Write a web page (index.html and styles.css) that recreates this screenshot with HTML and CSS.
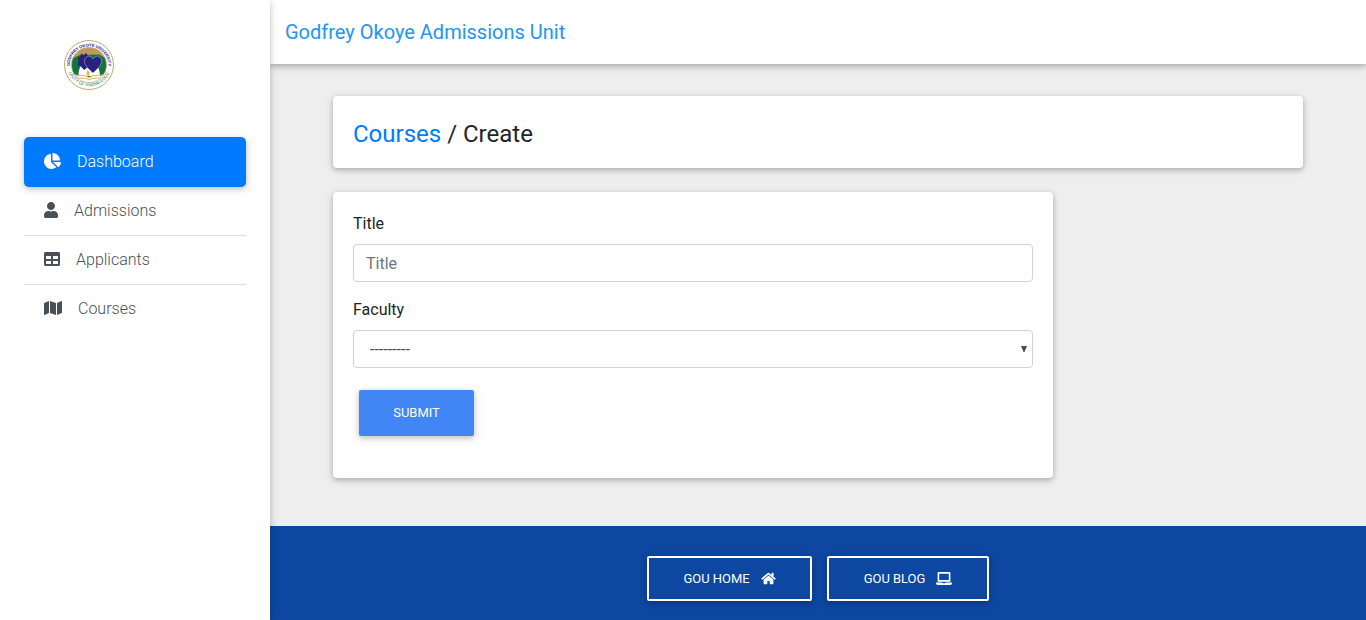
FILE: index.html
```html
<!DOCTYPE html>
<html lang="en">
<head>
<meta charset="utf-8">
<title>Godfrey Okoye Admissions Unit</title>
<link rel="stylesheet" href="styles.css">
</head>
<body>
<div class="app">
  <aside class="sidebar">
    <a class="logo" href="#">
      <svg width="50" height="50" viewBox="0 0 100 100">
        <defs>
          <path id="arc-top" d="M13 62A38.5 38.5 0 1 1 87 62"/>
          <path id="arc-bottom" d="M7 58A44 44 0 0 0 93 58"/>
          <clipPath id="disc"><circle cx="50" cy="50" r="35"/></clipPath>
        </defs>
        <circle cx="50" cy="50" r="49" fill="#fff" stroke="#c5a56c" stroke-width="2"/>
        <g clip-path="url(#disc)">
          <path fill="#fff" d="M0 0h100v100H0z"/>
          <path fill="#bd9a5b" d="M0 0h100v42H0z"/>
          <path fill="#16733b" d="M0 44L32 30 70 29 100 46V71L76 69 62 74H38L24 69 0 71z"/>
          <path fill="#fff" d="M29 72Q29 44 50 44T72 72z"/>
          <path fill="#fff" stroke="#d9b44e" stroke-width="2" d="M10 75Q36 66 50 75Q65 66 90 75V79Q65 73 50 79Q35 73 10 79z"/>
        </g>
        <circle cx="50" cy="50" r="35" fill="none" stroke="#c8aa70" stroke-width="1.5"/>
        <path fill="#28217f" d="M28 35l5-3 1-5 5 3 6-4 2 5 5 3-1 6-4 15-7 5-7-8-6-2 2-6z"/>
        <path fill="#28217f" stroke="#fff" stroke-width=".7" d="M58 66C48 57 41 51 41 42C41 31 54 29 58 38C63 28 76 32 75 43C74 52 66 59 58 66z"/>
        <path fill="#e0b53f" d="M47 59l4 6-1 7-5-2z"/>
        <text class="seal-top"><textPath href="#arc-top" startOffset="50%" text-anchor="middle">GODFREY OKOYE UNIVERSITY</textPath></text>
        <text class="seal-bottom"><textPath href="#arc-bottom" startOffset="50%" text-anchor="middle">UNITY OF KNOWLEDGE</textPath></text>
      </svg>
    </a>
    <nav class="menu">
      <a class="menu-item active" href="#">
        <svg class="icon" width="17" height="16" viewBox="0 0 544 512"><path d="M527.79 288H290.5l158.03 158.03c6.04 6.04 15.98 6.53 22.19.68 38.7-36.46 65.32-85.61 73.13-140.86 1.34-9.46-6.51-17.85-16.06-17.85zm-15.83-64.8C503.72 103.74 408.26 8.28 288.8.04 279.68-.59 272 7.1 272 16.24V240h223.77c9.14 0 16.82-7.68 16.19-16.8zM224 288V50.71c0-9.55-8.39-17.4-17.84-16.06C86.99 51.49-4.1 155.6.14 280.37 4.5 408.51 114.83 513.59 243.03 511.98c50.4-.63 96.97-16.87 135.26-44.03 7.9-5.6 8.42-17.23 1.57-24.08L224 288z"/></svg>
        <span>Dashboard</span>
      </a>
      <a class="menu-item" href="#">
        <svg class="icon" width="14" height="16" viewBox="0 0 448 512"><path d="M224 256c70.7 0 128-57.3 128-128S294.7 0 224 0 96 57.3 96 128s57.3 128 128 128zm89.6 32h-16.7c-22.2 10.2-46.9 16-72.9 16s-50.6-5.8-72.9-16h-16.7C60.2 288 0 348.2 0 422.4V464c0 26.5 21.5 48 48 48h352c26.5 0 48-21.5 48-48v-41.6c0-74.2-60.2-134.4-134.4-134.4z"/></svg>
        <span>Admissions</span>
      </a>
      <a class="menu-item" href="#">
        <svg class="icon" width="16" height="16" viewBox="0 0 512 512"><path d="M464 32H48C21.49 32 0 53.49 0 80v352c0 26.51 21.49 48 48 48h416c26.51 0 48-21.49 48-48V80c0-26.51-21.49-48-48-48zM224 416H64v-96h160v96zm0-160H64v-96h160v96zm224 160H288v-96h160v96zm0-160H288v-96h160v96z"/></svg>
        <span>Applicants</span>
      </a>
      <a class="menu-item" href="#">
        <svg class="icon" width="18" height="16" viewBox="0 0 576 512"><path d="M0 117.66v346.32c0 11.32 11.43 19.06 21.94 14.86L160 416V32L20.12 87.95A32.006 32.006 0 0 0 0 117.66zM192 416l192 64V96L192 32v384zM554.06 33.16L416 96v384l139.88-55.95A31.996 31.996 0 0 0 576 394.34V48.02c0-11.32-11.43-19.06-21.94-14.86z"/></svg>
        <span>Courses</span>
      </a>
    </nav>
  </aside>
  <div class="page">
    <header class="navbar"><a class="brand" href="#">Godfrey Okoye Admissions Unit</a></header>
    <main class="content">
      <section class="card heading-card">
        <h4 class="heading"><a href="#">Courses</a> <span>/</span> <span>Create</span></h4>
      </section>
      <section class="card form-card">
        <form>
          <div class="field">
            <label for="title">Title</label>
            <input class="control" id="title" type="text" placeholder="Title">
          </div>
          <div class="field">
            <label for="faculty">Faculty</label>
            <div class="select-wrap">
              <select class="control select" id="faculty"><option>---------</option></select>
              <svg class="caret" width="6" height="6" viewBox="0 0 6 6"><path d="M0 0h6L3.5 6h-1z"/></svg>
            </div>
          </div>
          <button class="btn btn-submit" type="button">Submit</button>
        </form>
      </section>
    </main>
    <footer class="footer">
      <a class="btn btn-outline" href="#">GOU Home
        <svg class="icon" width="15" height="13" viewBox="0 0 576 512"><path d="M280.37 148.26L96 300.11V464a16 16 0 0 0 16 16l112.06-.29a16 16 0 0 0 15.92-16V368a16 16 0 0 1 16-16h64a16 16 0 0 1 16 16v95.64a16 16 0 0 0 16 16.05L464 480a16 16 0 0 0 16-16V300L295.67 148.26a12.19 12.19 0 0 0-15.3 0zM571.6 251.47L488 182.56V44.05a12 12 0 0 0-12-12h-56a12 12 0 0 0-12 12v72.61L318.47 43a48 48 0 0 0-61 0L4.34 251.47a12 12 0 0 0-1.6 16.9l25.5 31A12 12 0 0 0 45.15 301l235.22-193.74a12.19 12.19 0 0 1 15.3 0L530.9 301a12 12 0 0 0 16.9-1.6l25.5-31a12 12 0 0 0-1.7-16.93z"/></svg>
      </a>
      <a class="btn btn-outline btn-blog" href="#">GOU Blog
        <svg class="icon" width="16" height="13" viewBox="0 0 640 512"><path d="M624 416H381.54c-.74 19.81-14.71 32-32.74 32H288c-18.69 0-33.02-17.47-32.77-32H16c-8.8 0-16 7.2-16 16v16c0 35.2 28.8 64 64 64h512c35.2 0 64-28.8 64-64v-16c0-8.8-7.2-16-16-16zM576 48c0-26.4-21.6-48-48-48H112C85.6 0 64 21.6 64 48v336h512V48zm-64 272H128V64h384v256z"/></svg>
      </a>
    </footer>
  </div>
</div>
</body>
</html>
```
FILE: styles.css
```css
* { box-sizing: border-box; }
body {
  margin: 0;
  background: #eee;
  color: #212529;
  font: 400 16px/24px Roboto, "Liberation Sans", sans-serif;
}
a { color: #007bff; text-decoration: none; }
.icon { fill: currentColor; flex: none; }
.app { display: flex; height: 620px; overflow: hidden; }

.sidebar {
  z-index: 2;
  position: relative;
  flex: none;
  width: 270px;
  padding: 40px 24px 0;
  background: #fff;
  box-shadow: 0 2px 5px rgba(0, 0, 0, .16), 0 2px 10px rgba(0, 0, 0, .12);
}
.logo { display: block; height: 97px; padding-left: 40px; }
.seal-top { font: 700 8.4px "Liberation Sans", sans-serif; letter-spacing: -.2px; fill: #28217f; }
.seal-bottom { font: 400 9px "Liberation Sans", sans-serif; fill: #2f7a56; }
.menu { display: flex; flex-direction: column; }
.menu-item {
  display: flex;
  align-items: center;
  gap: 16px;
  height: 49px;
  padding-left: 20px;
  border-bottom: 1px solid #dfdfdf;
  color: #495057;
  font-weight: 300;
}
.menu-item .icon { margin-bottom: 2px; }
.menu-item:last-child { border-bottom-color: transparent; }
.menu-item.active {
  height: 50px;
  border-color: #007bff;
  border-radius: 5px;
  background: #007bff;
  color: #fff;
  box-shadow: 0 2px 5px rgba(0, 0, 0, .16), 0 2px 10px rgba(0, 0, 0, .12);
}

.page { flex: 1; min-width: 0; display: flex; flex-direction: column; }
.navbar {
  flex: none;
  height: 64px;
  padding: 17px 15px;
  background: #fff;
  box-shadow: 0 2px 5px rgba(0, 0, 0, .2), 0 2px 10px rgba(0, 0, 0, .14);
}
.brand { display: block; color: #2196f3; font-size: 20px; line-height: 30px; }
.content { flex: none; height: 462px; padding: 32px 63px 0; }
.card {
  padding: 20px;
  border-radius: 4px;
  background: #fefefe;
  box-shadow: 0 2px 5px rgba(0, 0, 0, .2), 0 2px 10px rgba(0, 0, 0, .12);
}
.heading-card { height: 72px; margin-bottom: 24px; }
.heading { margin: 4px 0 0; font-size: 24px; font-weight: 400; line-height: 29px; }
.form-card { width: 720px; height: 286px; }
.field { margin-bottom: 16px; }
.field label { display: block; margin-bottom: 8px; }
.control {
  display: block;
  width: 100%;
  height: 38px;
  padding: 6px 12px;
  border: 1px solid #ced4da;
  border-radius: 4px;
  background: #fff;
  color: #495057;
  font: inherit;
}
.control::placeholder { color: #6c757d; opacity: 1; }
.select-wrap { position: relative; }
.select { appearance: none; padding: 7px 16px 5px; }
.caret { position: absolute; top: 16px; right: 6px; fill: #495057; }
.btn {
  display: inline-flex;
  align-items: center;
  justify-content: center;
  border-radius: 2px;
  color: #fff;
  font: 400 12.96px/19px Roboto, "Liberation Sans", sans-serif;
  text-transform: uppercase;
  box-shadow: 0 2px 5px rgba(0, 0, 0, .16), 0 2px 10px rgba(0, 0, 0, .12);
}
.btn-submit {
  display: flex;
  width: 115px;
  height: 46px;
  margin: 22px 6px 0;
  padding: 0 0 2px;
  border: 0;
  background: #4285f4;
}
.footer {
  flex: 1;
  display: flex;
  justify-content: center;
  align-items: flex-start;
  gap: 15px;
  padding-top: 30px;
  background: #0d47a1;
}
.btn-outline { gap: 11px; width: 165px; height: 45px; border: 2px solid #fff; }
.btn-blog { width: 162px; }
```
